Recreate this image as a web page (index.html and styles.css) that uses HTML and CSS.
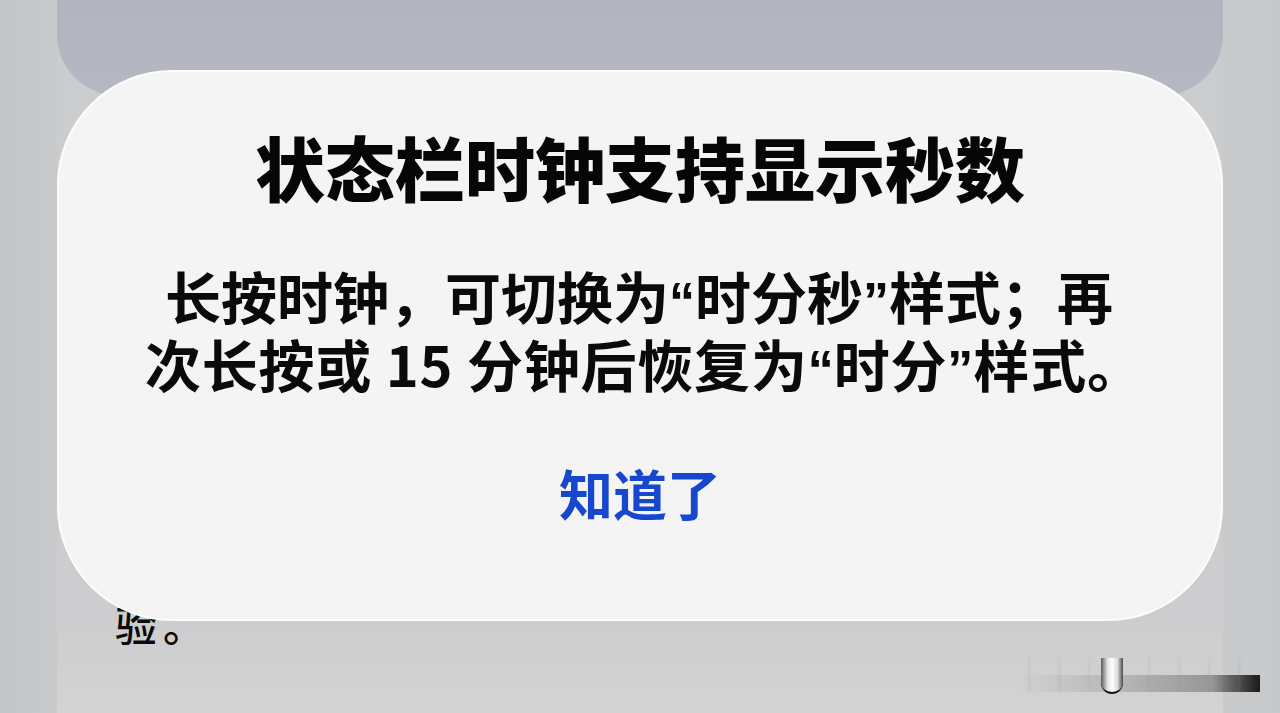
FILE: index.html
```html
<!DOCTYPE html>
<html lang="zh-CN">
<head>
<meta charset="utf-8">
<title>状态栏时钟支持显示秒数</title>
<link rel="stylesheet" href="styles.css">
</head>
<body>
<div class="screen">
  <div class="page">
    <div class="top-card"></div>
    <div class="dialog">
      <h1 class="dialog-title">状态栏时钟支持显示秒数</h1>
      <p class="dialog-body">
        <span class="line line-first">长按时钟，可切换为<span class="q">“</span>时分秒<span class="q">”</span>样式；再</span>
        <span class="line line-second">次长按或 15 分钟后恢复为<span class="q">“</span>时分<span class="q">”</span>样式。</span>
      </p>
      <div class="dialog-action">知道了</div>
    </div>
    <div class="behind-text">验<span class="dot">。</span></div>
  </div>
  <div class="watermark" aria-hidden="true">
    <div class="wm-band"></div>
    <div class="wm-stripes"></div>
    <div class="wm-capsule"></div>
  </div>
</div>
</body>
</html>
```

FILE: styles.css
```css
html, body {
  margin: 0;
  padding: 0;
}

body {
  width: 1280px;
  height: 713px;
  overflow: hidden;
  background: linear-gradient(to right, #c4c5c7 0, #c9cacc 57px, #c9cacc 1223px, #c7c8ca 1280px);
  font-family: "Noto Sans CJK SC", "Noto Sans", sans-serif;
}

.screen {
  position: relative;
  width: 1280px;
  height: 713px;
  display: flex;
}

.page {
  margin-left: 57px;
  width: 1166px;
  height: 713px;
  background: linear-gradient(to bottom, #cbccce 0, #cdcdcf 620px, #d3d3d3 713px);
  display: flex;
  flex-direction: column;
}

.top-card {
  height: 95px;
  flex: none;
  background: linear-gradient(to bottom, #b2b4be, #b5b7c2);
  border-radius: 0 0 60px 60px;
}

.dialog {
  position: relative;
  z-index: 2;
  margin-top: -25px;
  height: 551px;
  box-sizing: border-box;
  flex: none;
  background: #f4f4f5;
  border: 2px solid #fdfdfd;
  border-radius: 115px;
  display: flex;
  flex-direction: column;
  align-items: center;
}

.dialog-title {
  margin: 53px 0 0;
  font-size: 70px;
  line-height: 84px;
  font-weight: 900;
  color: #060606;
  white-space: nowrap;
}

.dialog-body {
  margin: 52px 0 0;
  align-self: flex-start;
  padding-left: 86px;
  font-size: 56px;
  line-height: 68px;
  font-weight: 700;
  color: #0a0a0a;
  display: flex;
  flex-direction: column;
}

.line {
  display: block;
  white-space: nowrap;
  height: 68px;
}

.line-first {
  padding-left: 20px;
}

.line-second {
  letter-spacing: 0.8px;
}

.q {
  font-family: "Liberation Sans", "Noto Sans", sans-serif;
  font-weight: 700;
  font-size: 52px;
  line-height: 1;
  letter-spacing: 0;
}

.dialog-action {
  margin-top: 61px;
  font-size: 54px;
  line-height: 70px;
  font-weight: 700;
  color: #1747cc;
}

.behind-text {
  position: relative;
  z-index: 1;
  margin-top: -23px;
  padding-left: 58px;
  font-size: 42px;
  line-height: 52px;
  font-weight: 500;
  color: #0a0a0a;
}

.dot {
  margin-left: 6px;
}

.watermark {
  position: absolute;
  left: 1015px;
  top: 652px;
  width: 245px;
  height: 44px;
}

.wm-band {
  position: absolute;
  left: 5px;
  top: 23px;
  width: 240px;
  height: 17px;
  background: linear-gradient(to right, rgba(120,120,120,0) 0, rgba(110,110,110,0.25) 40%, rgba(80,80,80,0.45) 80%, #2a2a2a 97%, #1c1c1c 100%);
  filter: blur(0.6px);
}

.wm-stripes {
  position: absolute;
  left: 5px;
  top: 6px;
  width: 225px;
  height: 34px;
  background: repeating-linear-gradient(to right, rgba(255,255,255,0) 0, rgba(255,255,255,0) 8px, rgba(150,150,150,0.25) 9px, rgba(255,255,255,0) 11px, rgba(255,255,255,0) 30px);
  filter: blur(0.8px);
}

.wm-capsule {
  position: absolute;
  left: 86px;
  top: 6px;
  width: 22px;
  height: 34px;
  border-radius: 0 0 11px 11px;
  background: linear-gradient(to right, #5a5a5a 0, #e4e4e4 30%, #ffffff 50%, #dcdcdc 75%, #4a4a4a 100%);
  border-bottom: 2px solid #111;
  filter: blur(0.4px);
}
```
